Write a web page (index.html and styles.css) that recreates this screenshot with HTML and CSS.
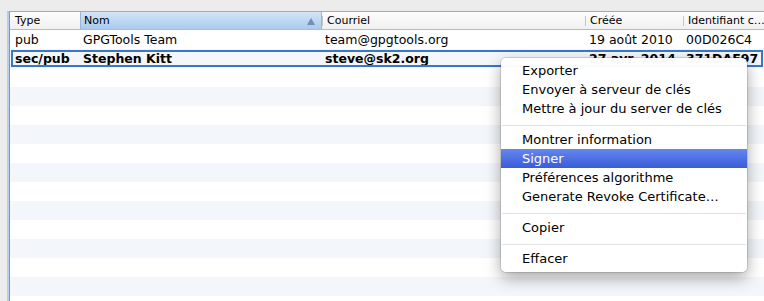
FILE: index.html
```html
<!DOCTYPE html>
<html lang="fr">
<head>
    <meta charset="UTF-8">
    <title>Trousseau GPG</title>
    <link rel="stylesheet" href="styles.css">
</head>
<body>

    <div class="frame">
        <div class="row head">
            <div class="cell c-type">Type</div>
            <div class="cell c-name sorted">Nom <span class="arrow"></span></div>
            <div class="cell c-mail">Courriel</div>
            <div class="cell c-date">Créée</div>
            <div class="cell c-id">Identifiant c…</div>
        </div>

        <div class="row">
            <div class="cell c-type">pub</div>
            <div class="cell c-name">GPGTools Team</div>
            <div class="cell c-mail">team@gpgtools.org</div>
            <div class="cell c-date">19 août 2010</div>
            <div class="cell c-id">00D026C4</div>
        </div>
        <div class="row odd selected">
            <div class="cell c-type">sec/pub</div>
            <div class="cell c-name">Stephen Kitt</div>
            <div class="cell c-mail">steve@sk2.org</div>
            <div class="cell c-date">27 avr. 2014</div>
            <div class="cell c-id">371DAF97</div>
        </div>
        <div class="row"></div>
        <div class="row odd"></div>
        <div class="row"></div>
        <div class="row odd"></div>
        <div class="row"></div>
        <div class="row odd"></div>
        <div class="row"></div>
        <div class="row odd"></div>
        <div class="row"></div>
        <div class="row odd"></div>
        <div class="row"></div>
        <div class="row odd"></div>
        <div class="row"></div>
    </div>

    <!-- menu contextuel -->
    <ul class="menu">
        <li>Exporter</li>
        <li>Envoyer à serveur de clés</li>
        <li>Mettre à jour du server de clés</li>
        <li class="sep"></li>
        <li>Montrer information</li>
        <li class="active">Signer</li>
        <li>Préférences algorithme</li>
        <li>Generate Revoke Certificate…</li>
        <li class="sep"></li>
        <li>Copier</li>
        <li class="sep"></li>
        <li>Effacer</li>
    </ul>

</body>
</html>
```

FILE: styles.css
```css
body {
    margin: 0;
    padding: 11px 0 0 9px;
    background-color: #ececec;
    font-family: 'DejaVu Sans', sans-serif;
    height: 301px;
    box-sizing: border-box;
    overflow: hidden;
}

.frame {
    background-color: #fff;
    border-top: 1px solid #a9a9a9;
    border-left: 1px solid #6d9ad2;
    box-shadow: -2px 0 0 #b7cfec;
    height: 100%;
    overflow: hidden;
}

.row {
    display: grid;
    grid-template-columns: 70px 242px 263px 98px 1fr;
    height: 19px;
    font-size: 12.5px;
    line-height: 19px;
    color: #000;
}

.row.odd {
    background-color: #f3f6fa;
}

.row.selected {
    font-weight: bold;
    outline: 2px solid #3a77c9;
    outline-offset: -3px;
}

.cell {
    padding-left: 3px;
    white-space: nowrap;
    overflow: hidden;
}

.c-type {
    padding-left: 5px;
}

.c-date {
    padding-left: 4px;
}

/* en-tete */
.head {
    height: 17px;
    line-height: 17px;
    font-size: 11px;
    background: linear-gradient(#fdfdfd, #f0f0f0);
    border-bottom: 1px solid #b9b9b9;
}

.head .cell {
    position: relative;
    padding-left: 5px;
}

.head .cell + .cell::before {
    content: '';
    position: absolute;
    left: 0;
    top: 4px;
    bottom: 3px;
    width: 1px;
    background-color: #c6c6c6;
}

.head .sorted {
    background: linear-gradient(#d3e5f7, #a9caee);
    border-left: 1px solid #9ab6d6;
    border-right: 1px solid #9ab6d6;
    padding-left: 3px;
}

.head .sorted::before {
    display: none;
}

.arrow {
    position: absolute;
    right: 6px;
    top: 6px;
    width: 0;
    height: 0;
    border-left: 4px solid transparent;
    border-right: 4px solid transparent;
    border-bottom: 7px solid #6f8fb4;
}

/* menu */
.menu {
    position: absolute;
    left: 501px;
    top: 58px;
    width: 246px;
    margin: 0;
    padding: 3px 0 4px;
    list-style: none;
    background-color: rgba(255, 255, 255, 0.97);
    border-radius: 5px;
    box-shadow: 0 0 0 1px rgba(0, 0, 0, 0.12), 0 6px 16px rgba(0, 0, 0, 0.35);
    font-size: 13px;
    color: #000;
}

.menu li {
    height: 19px;
    line-height: 19px;
    padding-left: 21px;
    white-space: nowrap;
}

.menu li.sep {
    height: 12px;
    padding: 0;
    position: relative;
}

.menu li.sep::after {
    content: '';
    position: absolute;
    left: 1px;
    right: 1px;
    top: 7px;
    height: 1px;
    background-color: #e2e2e2;
}

.menu li.active {
    color: #fff;
    background: linear-gradient(#6486ee, #3a5cd8);
}
```
